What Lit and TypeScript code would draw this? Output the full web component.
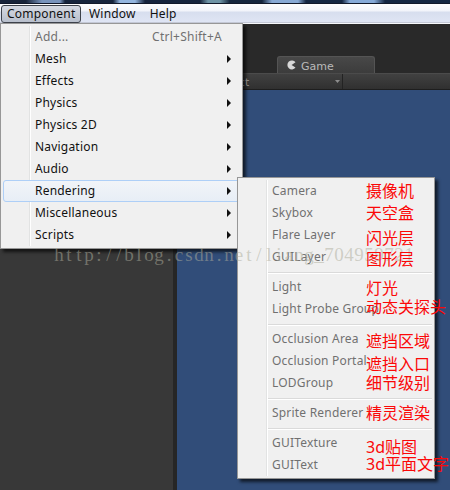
import { LitElement, html, css, svg } from "lit";
import { customElement } from "lit/decorators.js";

const MAIN = ["Mesh", "Effects", "Physics", "Physics 2D", "Navigation", "Audio", "Rendering", "Miscellaneous", "Scripts"];

const GROUPS = [
  ["Camera", "Skybox", "Flare Layer", "GUILayer"],
  ["Light", "Light Probe Group"],
  ["Occlusion Area", "Occlusion Portal", "LODGroup"],
  ["Sprite Renderer"],
  ["GUITexture", "GUIText"],
];

/* Annotations laid over the submenu: text and vertical centre. */
const NOTES: [string, number][] = [
  ["摄像机", 191], ["天空盒", 213], ["闪光层", 238], ["图形层", 258.5],
  ["灯光", 288], ["动态关探头", 307], ["遮挡区域", 341], ["遮挡入口", 364],
  ["细节级别", 383], ["精灵渲染", 413], ["3d贴图", 447], ["3d平面文字", 464],
];

const MARK = "http://blog.csdn.net/liang_704959721";
/* One centre per character gives the watermark its fixed pitch. */
const MARK_X = Array.from(MARK, (_, i) => 5 + i * 10).join(" ");

@customElement("app-root")
export class AppRoot extends LitElement {
  static styles = css`
    :host { display: block; position: relative; width: 450px; height: 490px; overflow: hidden;
      font: 12px/22px "Noto Sans", "Noto Sans CJK SC", sans-serif; letter-spacing: 0.2px; color: #111; }
    * { box-sizing: border-box; }
    .window { display: flex; flex-direction: column; height: 490px; background: #292929; }
    .glass { height: 4px; flex: none; border-bottom: 1px solid #10182a;
      background: linear-gradient(90deg, #18243a 0 26px, #7894bd 42px 60px, #16243c 65px 113px, #93b5df 120px 135px, #16243d 145px 200px, #6e93a5 208px 220px, #14253d 230px 262px, #87a9d5 272px 298px, #142642 306px 342px, #86aad8 350px 374px, #142642 385px); }
    .bar { display: flex; flex: none; height: 20px; padding: 0 1px; border-bottom: 1px solid #f7f8fc;
      background: linear-gradient(#fdfdfe 0, #f2f4fa 7px, #d7deee 8px, #dfe5f4 18px, #a9acb8 19px); }
    .bar span { height: 19px; line-height: 19px; padding: 0 6px; margin-right: 2px; }
    .bar .open { width: 80px; height: 18px; margin-top: 1px; line-height: 16px; padding: 0 5px; border: 1px solid #3d424b; border-radius: 3px;
      background: linear-gradient(#d5d9e2, #b8bfcc); }
    .bar .help { padding-left: 6px; }
    .tabs { height: 49px; flex: none; display: flex; align-items: flex-end; padding-left: 277px; }
    .tab { display: flex; align-items: center; gap: 5px; width: 98px; height: 17px; padding: 1px 0 0 9px; border: 1px solid #545454; border-bottom: 0;
      border-radius: 3px 3px 0 0; background: linear-gradient(#484848, #3c3c3c); color: #b9b9b9;
      font: 11px/18px "DejaVu Sans", sans-serif; letter-spacing: 0; }
    .tab svg { margin-top: -2px; }
    .tab span { margin-top: 2px; }
    .tools { display: flex; align-items: center; flex: none; height: 17px; padding-left: 235px; border-top: 1px solid #4b4b4b; border-bottom: 1px solid #1e1e1e;
      background: linear-gradient(#414141, #303030); color: #aaa; font: 10.5px/15px "DejaVu Sans", sans-serif; }
    .drop { display: flex; justify-content: space-between; align-items: center; width: 108px; height: 15px; padding-right: 2px; border-right: 1px solid #232323; }
    .drop span { padding: 2px 0 0 4px; }
    .panes { display: flex; flex: 1; }
    .left { width: 177px; border-right: 4px solid #262626; background: #383838; }
    .scene { flex: 1; background: #314d79; }
    .menu { position: absolute; background: #f0f0f0; border: 1px solid #979797; box-shadow: 3px 3px 3px rgba(0, 0, 0, .65); }
    .main { left: 0; top: 23px; width: 243px; height: 226px; padding: 2px; }
    .sub { left: 237px; top: 177px; width: 198px; height: 302px; padding: 2px; }
    .gutter { position: absolute; top: 2px; bottom: 2px; left: 28px; width: 2px; border-left: 1px solid #e2e3e3; border-right: 1px solid #fff; }
    .row { position: relative; display: flex; justify-content: space-between; align-items: center; height: 22px; padding: 0 8px 0 31px; border: 1px solid transparent; white-space: nowrap; line-height: 20px; }
    .main .off { padding-right: 17px; letter-spacing: 0.25px; }
    .off, .sub .row { color: #707070; }
    .hot { border-color: #aecff7; border-radius: 3px; background: linear-gradient(#f1f4f8, #e7eef6); }
    .sep { height: 8px; margin-left: 28px; padding-top: 4px; }
    .sep i { display: block; height: 2px; border-top: 1px solid #dadada; border-bottom: 1px solid #fff; }
    .mark { position: absolute; left: 54px; top: 242px; width: 364px; height: 30px; letter-spacing: 0;
      font: 19px "Liberation Serif", serif; fill: rgba(172, 172, 155, .52); text-anchor: middle; }
    .note { position: absolute; left: 366px; height: 20px; line-height: 20px; margin-top: -10px; font-size: 16px; letter-spacing: 0; color: #fb0808; white-space: nowrap; }
  `;

  private arrow() {
    return html`<svg width="4" height="8" viewBox="0 0 4 8">${svg`<path d="M0 0 L4 4 L0 8Z" fill="#111"/>`}</svg>`;
  }

  render() {
    return html`
      <div class="window">
        <div class="glass"></div>
        <div class="bar"><span class="open">Component</span><span>Window</span><span class="help">Help</span></div>
        <div class="tabs"><div class="tab">
          <svg width="9" height="10" viewBox="0 0 9 10"><path d="M8.5 2.2 A4.5 4.5 0 1 0 8.5 7.6 L4.6 5Z" fill="#d8d8d8"/></svg><span>Game</span></div></div>
        <div class="tools"><div class="drop"><span>ct</span>
          <svg width="5" height="3" viewBox="0 0 5 3"><path d="M0 0H5L2.5 3Z" fill="#8c8c8c"/></svg></div></div>
        <div class="panes"><div class="left"></div><div class="scene"></div></div>
      </div>
      <div class="menu main">
        <div class="gutter"></div>
        <div class="row off"><span>Add...</span><span>Ctrl+Shift+A</span></div>
        ${MAIN.map((t) => html`<div class="row ${t === "Rendering" ? "hot" : ""}"><span>${t}</span>${this.arrow()}</div>`)}
      </div>
      <div class="menu sub">
        <div class="gutter"></div>
        ${GROUPS.map((g, i) => html`${i ? html`<div class="sep"><i></i></div>` : ""}${g.map((t) => html`<div class="row">${t}</div>`)}`)}
      </div>
      <svg class="mark"><text x=${MARK_X} y="19">${MARK}</text></svg>
      ${NOTES.map(([t, y]) => html`<div class="note" style="top:${y}px">${t}</div>`)}
    `;
  }
}
